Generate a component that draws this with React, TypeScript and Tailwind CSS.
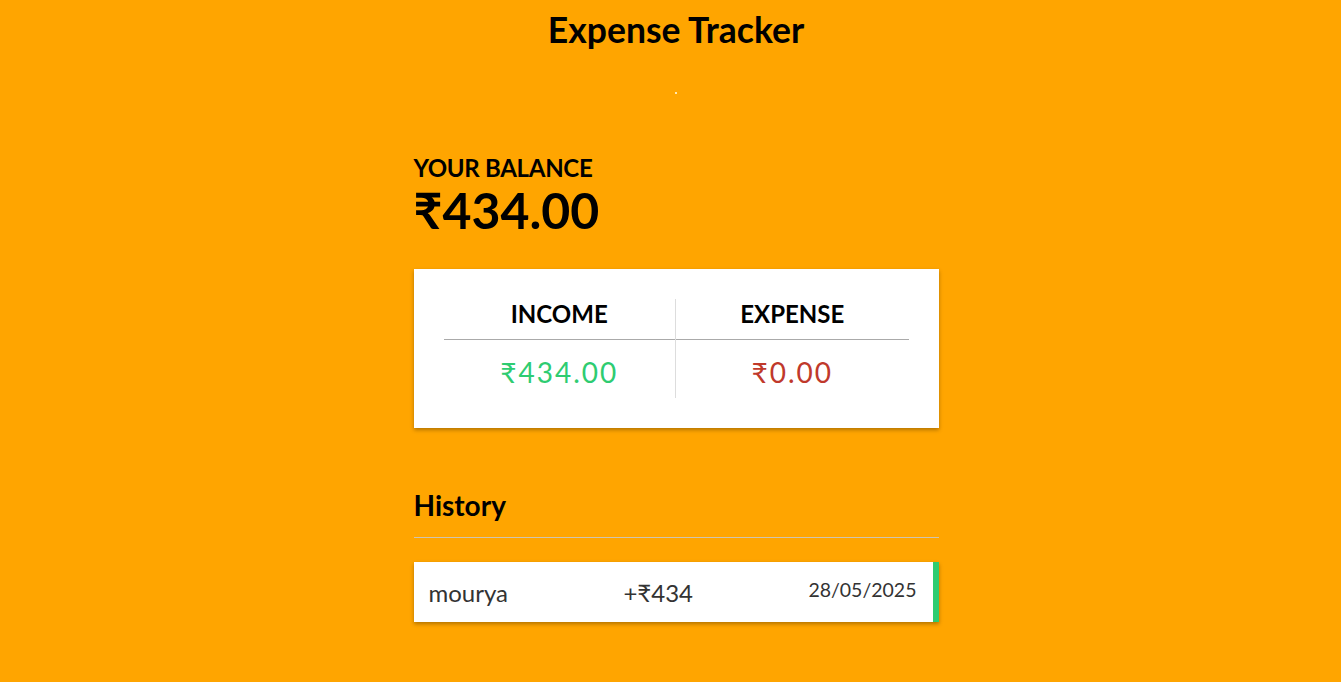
import React from "react";

// 取引データ（サンプル）
type Txn = { id: number; text: string; amount: number; date: string };

const transactions: Txn[] = [
  { id: 1, text: "mourya", amount: 434, date: "28/05/2025" },
];

const fmt = (n: number) => "₹" + Math.abs(n).toFixed(2);

export default function App() {
  const income = transactions.filter((t) => t.amount > 0).reduce((a, t) => a + t.amount, 0);
  const expense = transactions.filter((t) => t.amount < 0).reduce((a, t) => a + t.amount, 0);
  const balance = income + expense;

  return (
    <div className="min-h-screen bg-[#ffa500] pl-[11px] text-black font-['Lato','Noto_Sans',sans-serif]">
      <h1 className="pt-[9px] text-center text-[35.5px] leading-[42px] font-bold">Expense Tracker</h1>

      {/* 小さな点 */}
      <div className="mx-auto mt-[41px] h-[2px] w-[2px] bg-[#ffe7b0]" />

      <div className="mx-auto w-[525px]">
        <h4 className="mt-[59px] text-[24px] leading-[29px] font-bold uppercase tracking-[-0.3px]">Your Balance</h4>
        <p className="-mt-[2px] text-[50px] leading-[60px] font-bold">{fmt(balance)}</p>

        {/* 収入・支出 */}
        <div className="mt-[29px] grid grid-cols-2 bg-white p-[30px] shadow-[0_2px_4px_rgba(0,0,0,0.3)]">
          <div className="border-r border-[#ddd] text-center">
            <h4 className="border-b border-[#aaa] pb-[11px] text-[24px] leading-[29px] font-bold uppercase">Income</h4>
            <p className="mt-[15px] mb-[9px] text-[28px] leading-[34px] tracking-[2px] text-[#2ecc71]">{fmt(income)}</p>
          </div>
          <div className="text-center">
            <h4 className="border-b border-[#aaa] pb-[11px] text-[24px] leading-[29px] font-bold uppercase">Expense</h4>
            <p className="mt-[15px] mb-[9px] text-[28px] leading-[34px] tracking-[2px] text-[#c0392b]">{fmt(expense)}</p>
          </div>
        </div>

        {/* 履歴 */}
        <h3 className="mt-[60px] border-b border-[#cfc4b0] pb-[15px] text-[28px] leading-[34px] font-bold">History</h3>
        <ul className="mt-[24px]">
          {transactions.map((t) => (
            <li
              key={t.id}
              className="flex h-[60px] items-center justify-between border-r-[6px] border-[#2ecc71] bg-white pr-[16px] pl-[15px] text-[#333] shadow-[0_2px_4px_rgba(0,0,0,0.3)]"
            >
              <span className="mt-[2px] text-[24px]">{t.text}</span>
              <span className="mt-[2px] text-[24px]">{(t.amount > 0 ? "+" : "-") + "₹" + Math.abs(t.amount)}</span>
              <span className="-mt-[4px] text-[19.5px]">{t.date}</span>
            </li>
          ))}
        </ul>
      </div>
    </div>
  );
}
